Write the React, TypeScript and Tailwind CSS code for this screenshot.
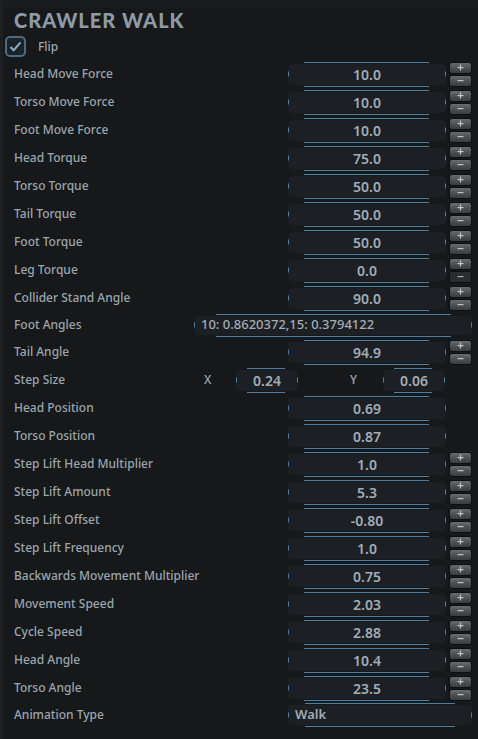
import type { ReactNode } from 'react'

type Row =
  | { kind: 'num'; label: string; value: string; buttons?: boolean; minusDisabled?: boolean }
  | { kind: 'text'; label: string; value: string }
  | { kind: 'vec'; label: string; x: string; y: string }
  | { kind: 'enum'; label: string; value: string }

const rows: Row[] = [
  { kind: 'num', label: 'Head Move Force', value: '10.0', buttons: true },
  { kind: 'num', label: 'Torso Move Force', value: '10.0', buttons: true },
  { kind: 'num', label: 'Foot Move Force', value: '10.0', buttons: true },
  { kind: 'num', label: 'Head Torque', value: '75.0', buttons: true },
  { kind: 'num', label: 'Torso Torque', value: '50.0', buttons: true },
  { kind: 'num', label: 'Tail Torque', value: '50.0', buttons: true },
  { kind: 'num', label: 'Foot Torque', value: '50.0', buttons: true },
  { kind: 'num', label: 'Leg Torque', value: '0.0', buttons: true, minusDisabled: true },
  { kind: 'num', label: 'Collider Stand Angle', value: '90.0', buttons: true },
  { kind: 'text', label: 'Foot Angles', value: '10: 0.8620372,15: 0.3794122' },
  { kind: 'num', label: 'Tail Angle', value: '94.9', buttons: true },
  { kind: 'vec', label: 'Step Size', x: '0.24', y: '0.06' },
  { kind: 'num', label: 'Head Position', value: '0.69' },
  { kind: 'num', label: 'Torso Position', value: '0.87' },
  { kind: 'num', label: 'Step Lift Head Multiplier', value: '1.0', buttons: true },
  { kind: 'num', label: 'Step Lift Amount', value: '5.3', buttons: true },
  { kind: 'num', label: 'Step Lift Offset', value: '-0.80', buttons: true },
  { kind: 'num', label: 'Step Lift Frequency', value: '1.0', buttons: true },
  { kind: 'num', label: 'Backwards Movement Multiplier', value: '0.75', buttons: true },
  { kind: 'num', label: 'Movement Speed', value: '2.03', buttons: true },
  { kind: 'num', label: 'Cycle Speed', value: '2.88', buttons: true },
  { kind: 'num', label: 'Head Angle', value: '10.4', buttons: true },
  { kind: 'num', label: 'Torso Angle', value: '23.5', buttons: true },
  { kind: 'enum', label: 'Animation Type', value: 'Walk' },
]

// input box with the blue accent lines above and below
function Field({
  width,
  height,
  inset,
  align = 'center',
  children,
}: {
  width: string
  height: string
  inset: string
  align?: 'center' | 'left'
  children: ReactNode
}) {
  return (
    <div className={`relative ${width} ${height}`}>
      <div className={`absolute top-[-2px] h-px bg-[#4d7ea3] ${inset}`} />
      <div
        className={`flex h-full items-center rounded-[4px] bg-[#1c1f23] ${
          align === 'center' ? 'justify-center' : 'justify-start pl-[7px]'
        }`}
      >
        {children}
      </div>
      <div className={`absolute bottom-[-2px] h-px bg-[#4d7ea3] ${inset}`} />
      <div className="absolute left-0 top-1/2 h-[5px] w-px -translate-y-1/2 bg-[#4d7ea3]" />
      <div className="absolute right-0 top-1/2 h-[5px] w-px -translate-y-1/2 bg-[#4d7ea3]" />
    </div>
  )
}

function StepButton({ sign, disabled }: { sign: '+' | '-'; disabled?: boolean }) {
  return (
    <div
      className={`flex h-[12px] w-[23px] items-center justify-center rounded-[3px] border border-[#0e0f10] ${
        disabled
          ? 'bg-[#2a2c2e]'
          : 'bg-gradient-to-b from-[#6a6d70] via-[#4e5153] to-[#3a3d3f]'
      }`}
    >
      <svg width="9" height="9" viewBox="0 0 9 9">
        <rect x="1.5" y="4" width="6" height="1.2" fill={disabled ? '#a2a6aa' : '#bfc4c9'} />
        {sign === '+' && <rect x="3.9" y="1.5" width="1.2" height="6" fill="#bfc4c9" />}
      </svg>
    </div>
  )
}

const valueText = 'text-[14px] font-semibold text-[#a3adb6]'
const labelText = 'text-[12px] font-medium text-[#9ca6ae]'

function RowView({ row }: { row: Row }) {
  const tall = row.kind === 'text' || row.kind === 'enum'
  return (
    <div className={`flex items-center pl-[11px] pr-[6px] ${tall ? 'h-[26px]' : 'h-[28px]'}`}>
      <div className={`flex-1 ${labelText}`}>{row.label}</div>
      {row.kind === 'num' && (
        <div className="flex items-center">
          <Field width="w-[158px]" height="h-[21px]" inset="left-[16px] right-[17px]">
            <span className={valueText}>{row.value}</span>
          </Field>
          {row.buttons ? (
            <div className="ml-[3px] flex flex-col gap-[1px]">
              <StepButton sign="+" />
              <StepButton sign="-" disabled={row.minusDisabled} />
            </div>
          ) : (
            <div className="w-[26px]" />
          )}
        </div>
      )}
      {row.kind === 'text' && (
        <Field width="w-[278px]" height="h-[19px]" inset="left-[22px] right-[21px]" align="left">
          <span className="text-[13px] font-medium text-[#a3adb6]">{row.value}</span>
        </Field>
      )}
      {row.kind === 'enum' && (
        <Field width="w-[184px]" height="h-[20px]" inset="left-[17px] right-[17px]" align="left">
          <span className="text-[13px] font-semibold text-[#a3adb6]">{row.value}</span>
        </Field>
      )}
      {row.kind === 'vec' && (
        <div className="flex items-center">
          <span className={`w-[32px] ${labelText}`}>X</span>
          <Field width="w-[62px]" height="h-[21px]" inset="left-[11px] right-[13px]">
            <span className={valueText}>{row.x}</span>
          </Field>
          <span className={`w-[85px] pl-[52px] ${labelText}`}>Y</span>
          <Field width="w-[62px]" height="h-[21px]" inset="left-[11px] right-[13px]">
            <span className={valueText}>{row.y}</span>
          </Field>
          <div className="w-[27px]" />
        </div>
      )}
    </div>
  )
}

export default function App() {
  return (
    <div
      className="min-h-[739px] w-full border-l-[3px] border-[#1d1f21] bg-[#161819]"
      style={{ fontFamily: '"Noto Sans", "Open Sans", sans-serif' }}
    >
      <div className="h-[8px] bg-[#191b1d]" />
      <div
        className="h-[25px] pl-[11px] text-[20px] font-black leading-[25px] tracking-[0.05em] text-[#8e9ba7]"
        style={{ fontFamily: 'Lato, "Noto Sans", sans-serif' }}
      >
        CRAWLER WALK
      </div>
      <div className="flex h-[27px] items-center pl-[2px]">
        <div className="flex h-[21px] w-[21px] items-center justify-center rounded-[5px] border-2 border-[#4c6b82] bg-[#1d2226]">
          <svg width="13" height="11" viewBox="0 0 14 12">
            <path d="M1.5 6.5 L5 10 L12.5 1.5" fill="none" stroke="#86aecb" strokeWidth="2.2" />
          </svg>
        </div>
        <span className={`ml-[12px] ${labelText}`}>Flip</span>
      </div>
      {rows.map((r) => (
        <RowView key={r.label} row={r} />
      ))}
    </div>
  )
}
